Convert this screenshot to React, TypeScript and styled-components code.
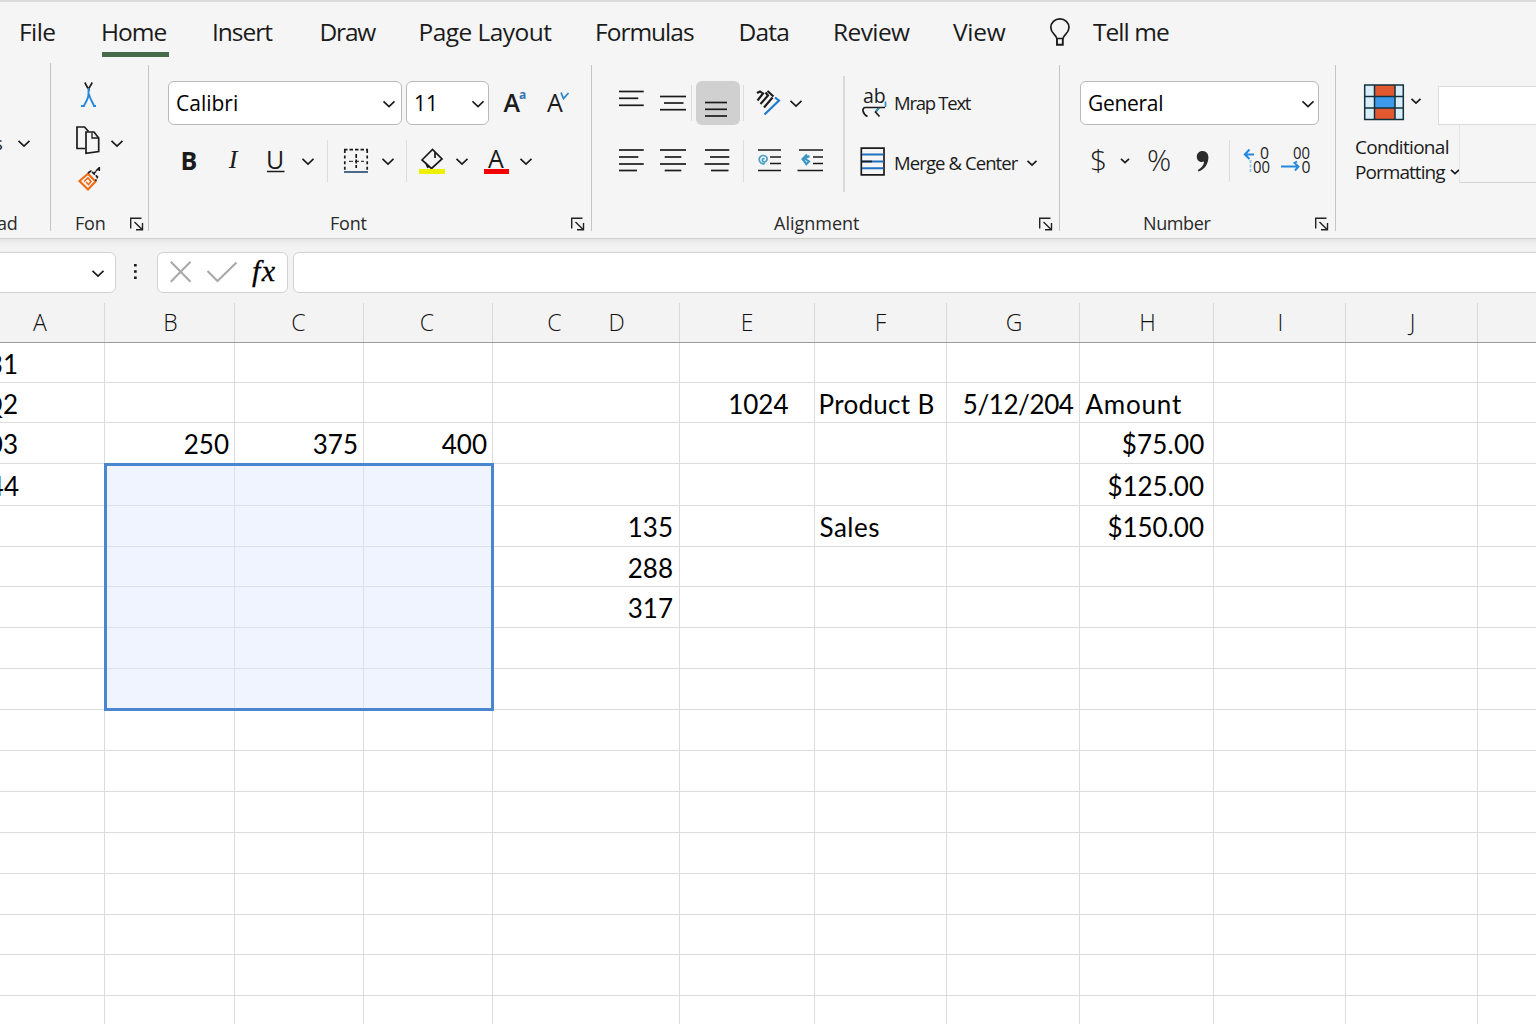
import React from "react";
import styled, { createGlobalStyle, css } from "styled-components";

const UI_FONT = `"Open Sans", "Noto Sans", sans-serif`;
const CELL_FONT = `Lato, "Open Sans", sans-serif`;

const GlobalStyle = createGlobalStyle`
  *, *::before, *::after { box-sizing: border-box; }
  html, body { margin: 0; padding: 0; overflow: hidden; }
  body { background: #fff; font-family: ${UI_FONT}; color: #1b1b1b; }
  svg { display: block; flex: none; }
`;

const Window = styled.div`
  width: 1536px;
  height: 1024px;
  overflow: hidden;
  display: flex;
  flex-direction: column;
  background: #fff;
`;

/* ---------- tabs ---------- */

const TabBar = styled.nav`
  flex: none;
  display: flex;
  height: 62px;
  padding: 0 0 0 18px;
  background: #f5f5f5;
  border-top: 2px solid #dadada;
`;

const Tab = styled.div<{ $w: number; $ls: number; $ml?: number; $active?: boolean }>`
  flex: none;
  width: ${(p) => p.$w}px;
  height: 56px;
  padding-left: ${(p) => p.$ml ?? 0}px;
  font-size: 24.5px;
  letter-spacing: ${(p) => p.$ls}px;
  line-height: 60px;
  white-space: nowrap;
  span {
    display: inline-block;
    height: 56px;
    ${(p) =>
      p.$active &&
      css`
        background: linear-gradient(#456b4b, #456b4b) 1px 50px / 67px 5px no-repeat;
        padding-right: 4px;
      `}
  }
`;

/* ---------- ribbon ---------- */

const Ribbon = styled.div`
  flex: none;
  display: flex;
  height: 177px;
  background: #f5f5f5;
  border-bottom: 1px solid #cfcfcf;
`;

const Group = styled.section<{ $w: number; $pl?: number }>`
  flex: none;
  display: flex;
  flex-direction: column;
  width: ${(p) => p.$w}px;
  padding: 19px 0 0 ${(p) => p.$pl ?? 0}px;
`;

const GroupDivider = styled.div<{ $top?: number }>`
  flex: none;
  width: 1px;
  height: ${(p) => 169 - (p.$top ?? 3)}px;
  margin-top: ${(p) => p.$top ?? 3}px;
  background: #c4c4c4;
`;

const Row = styled.div<{ $h?: number; $mt?: number; $pl?: number }>`
  flex: none;
  display: flex;
  align-items: center;
  height: ${(p) => p.$h ?? 44}px;
  margin-top: ${(p) => p.$mt ?? 0}px;
  padding-left: ${(p) => p.$pl ?? 0}px;
`;

const Footer = styled.div<{ $mt?: number; $pl: number }>`
  flex: none;
  display: flex;
  align-items: center;
  height: 24px;
  margin-top: ${(p) => p.$mt ?? 29}px;
  padding-left: ${(p) => p.$pl}px;
  font-size: 18px;
  line-height: 24px;
  color: #2a2a2a;
`;

const FooterText = styled.span<{ $w: number; $ls?: number }>`
  flex: none;
  width: ${(p) => p.$w}px;
  height: 26px;
  letter-spacing: ${(p) => p.$ls ?? -0.2}px;
  white-space: nowrap;
`;

const ClippedText = styled.span<{ $shift: number }>`
  display: block;
  margin-left: -${(p) => p.$shift}px;
`;

const Glyph = styled.span<{ $w: number; $size?: number; $weight?: number; $serif?: boolean }>`
  flex: none;
  display: block;
  width: ${(p) => p.$w}px;
  height: 44px;
  text-align: center;
  line-height: 42px;
  font-size: ${(p) => p.$size ?? 24}px;
  font-weight: ${(p) => p.$weight ?? 400};
  ${(p) => p.$serif && `font-family: "Liberation Serif", serif; font-style: italic;`}
`;

const Select = styled.div<{ $w: number; $mr?: number; $ls?: number }>`
  flex: none;
  display: flex;
  align-items: center;
  justify-content: space-between;
  width: ${(p) => p.$w}px;
  height: 44px;
  margin-right: ${(p) => p.$mr ?? 0}px;
  padding: 0 4px 0 7px;
  border: 1px solid #b9b9b9;
  border-radius: 6px;
  background: #fff;
  font-size: 21px;
  letter-spacing: ${(p) => p.$ls ?? 0}px;
  line-height: 42px;
  color: #000;
`;

const Rule = styled.div<{ $ml?: number; $mr?: number; $h?: number }>`
  flex: none;
  width: 1px;
  height: ${(p) => p.$h ?? 42}px;
  margin: 0 ${(p) => p.$mr ?? 0}px 0 ${(p) => p.$ml ?? 0}px;
  background: #dcdcdc;
`;

const Pressed = styled.div`
  flex: none;
  width: 44px;
  height: 44px;
  border-radius: 6px;
  background: #d0d0d0;
`;

const CommandText = styled.span<{ $w: number; $ls: number; $size?: number }>`
  flex: none;
  width: ${(p) => p.$w}px;
  height: 27px;
  font-size: ${(p) => p.$size ?? 18.5}px;
  letter-spacing: ${(p) => p.$ls}px;
  line-height: 25px;
  white-space: nowrap;
`;

const Split = styled.div`
  display: flex;
  height: 100px;
`;

const Column = styled.div<{ $w?: number }>`
  flex: none;
  display: flex;
  flex-direction: column;
  ${(p) => p.$w && `width: ${p.$w}px;`}
`;

const InnerDivider = styled.div`
  flex: none;
  width: 2px;
  height: 116px;
  margin-top: -5px;
  background: #d9d9d9;
`;

const StyleBox = styled.div`
  flex: none;
  width: 110px;
  height: 39px;
  margin: 4px 0 0 12px;
  background: #fff;
  border: 1px solid #dcdcdc;
`;

const StylePanel = styled.div`
  flex: none;
  width: 90px;
  height: 58px;
  border-left: 1px solid #e4e4e4;
  border-bottom: 1px solid #d4d4d4;
`;

/* ---------- formula bar ---------- */

const FormulaBar = styled.div`
  flex: none;
  display: flex;
  align-items: flex-start;
  height: 64px;
  padding-top: 13px;
  background: linear-gradient(#e6e6e6 0, #efefef 5px, #f3f3f3 10px);
`;

const Field = styled.div<{ $w: number; $ml?: number; $pl?: number }>`
  flex: none;
  display: flex;
  align-items: center;
  width: ${(p) => p.$w}px;
  height: 41px;
  margin-left: ${(p) => p.$ml ?? 0}px;
  padding-left: ${(p) => p.$pl ?? 0}px;
  background: #fff;
  border: 1px solid #d2d2d2;
  border-radius: 6px;
`;

const Fx = styled.span`
  height: 41px;
  padding-left: 1px;
  font-family: "Liberation Serif", serif;
  font-style: italic;
  font-size: 30px;
  letter-spacing: 1.5px;
  line-height: 37px;
  color: #000;
  -webkit-text-stroke: 0.3px #000;
`;

/* ---------- sheet ---------- */

const COLS = [105, 130, 129, 129, 187, 135, 132, 133, 134, 132, 132, 133];
const ROWS = [40, 40, 41, 42, 41, 40, 41, 41, 41, 41, 41, 41, 41, 41, 40, 41, 41];
const template = (a: number[]) => a.map((n) => n + "px").join(" ");

const HeaderRow = styled.div`
  flex: none;
  display: grid;
  grid-template-columns: ${template(COLS)};
  height: 40px;
  background: #f3f3f3;
  border-bottom: 1px solid #9b9b9b;
`;

const HeaderCell = styled.div<{ $pad?: number }>`
  display: flex;
  justify-content: center;
  gap: 47px;
  padding: 0 ${(p) => p.$pad ?? 0}px 0 2px;
  border-right: 1px solid #d9d9d9;
  font-weight: 350;
  font-size: 23px;
  line-height: 39px;
  color: #111;
  overflow: hidden;
`;

const Sheet = styled.div`
  flex: none;
  display: grid;
  grid-template-columns: ${template(COLS)};
  grid-template-rows: ${template(ROWS)};
  font-family: ${CELL_FONT};
  font-size: 26px;
  color: #000;
`;

const Cell = styled.div<{ $align?: "left" | "right"; $pad?: number; $ls?: number; $sel?: boolean }>`
  display: flex;
  align-items: center;
  justify-content: ${(p) => (p.$align === "right" ? "flex-end" : "flex-start")};
  padding: ${(p) => (p.$align === "right" ? `2px ${p.$pad ?? 6}px 0 0` : `2px 0 0 ${p.$pad ?? 5}px`)};
  border-right: 1px solid ${(p) => (p.$sel ? "#dbe0e9" : "#dcdcdc")};
  border-bottom: 1px solid ${(p) => (p.$sel ? "#dbe0e9" : "#dcdcdc")};
  background: ${(p) => (p.$sel ? "#eff4fe" : "#fff")};
  letter-spacing: ${(p) => p.$ls ?? 0}px;
  white-space: nowrap;
  overflow: hidden;
  line-height: 30px;
`;

const Selection = styled.div`
  grid-column: 2 / 5;
  grid-row: 4 / 10;
  margin: -1px -1px -1px -1px;
  border: 3px solid #4a86cf;
  z-index: 1;
`;

/* ---------- icons ---------- */

type IconProps = { x: number; y?: number; w: number; h?: number; children: React.ReactNode };

const Icon = ({ x, y = 81, w, h = 44, children }: IconProps) => (
  <svg width={w} height={h} viewBox={`${x} ${y} ${w} ${h}`} fill="none" stroke="#1b1b1b" strokeWidth="1.7">
    {children}
  </svg>
);

const Chevron = ({ w = 20, size = 11, dy = 0 }: { w?: number; size?: number; dy?: number }) => (
  <svg width={w} height="20" viewBox={`${-w / 2} ${-10 - dy} ${w} 20`} fill="none" stroke="#1b1b1b" strokeWidth="1.7">
    <path d={`M${-size / 2} -2.2L0 ${size / 2 - 2.5}L${size / 2} -2.2`} />
  </svg>
);

const Launcher = () => (
  <svg width="15" height="15" viewBox="-0.5 0.5 15 15" fill="none" stroke="#222" strokeWidth="1.4">
    <path d="M1.2 12V1.7H12M5 5.5L12.6 13M13 6.5V13.3H6.5" />
  </svg>
);

const Lines = ({ x, y, w, lines }: { x: number; y: number; w: number; lines: number[][] }) => (
  <Icon x={x} y={y} w={w}>
    {lines.map(([ly, a, b], i) => (
      <path key={i} d={`M${a} ${ly}H${b}`} />
    ))}
  </Icon>
);

/* ---------- ribbon groups ---------- */

const PasteGroup = () => (
  <Group $w={50}>
    <Row $mt={40} $h={44}>
      <CommandText $w={14} $ls={0}>
        <ClippedText $shift={6}>s</ClippedText>
      </CommandText>
      <Chevron />
    </Row>
    <Footer $pl={0} $mt={47}>
      <FooterText $w={30}>
        <ClippedText $shift={3}>ad</ClippedText>
      </FooterText>
    </Footer>
  </Group>
);

const ClipboardGroup = () => (
  <Group $w={97} $pl={20}>
    <Row $h={28}>
      <Icon x={71} y={81} w={34} h={28}>
        <path d="M84.8 82.5L88 88.5M92.3 82.5L88.8 88.5V91" strokeWidth="1.6" />
        <path d="M88.5 88V94C88.5 99 85 103 84 106H81M89 94C89.5 99 93 102 94 106H96" stroke="#2488d8" strokeWidth="1.9" />
      </Icon>
    </Row>
    <Row $h={30} $mt={16}>
      <Icon x={71} y={125} w={36} h={30}>
        <path d="M85 148.5H77V127H84.5L88.5 131.5" />
        <path d="M86 132H94L98.7 138V151.6L86 153.3Z" />
        <path d="M92 132.5V138H98" strokeWidth="1.3" />
      </Icon>
      <Chevron dy={3} />
    </Row>
    <Row $h={28} $mt={10}>
      <Icon x={71} y={165} w={34} h={28}>
        <path d="M79.5 181L88 173.8L95.5 181.5L88 189.5Z" stroke="#f06a12" strokeWidth="2.1" />
        <path d="M84 181.5L88 178L91 181.5L88.5 184.5L86 182" stroke="#f06a12" strokeWidth="1.6" />
        <path d="M88 173L91 171L97.5 177L95.5 181M93 174L96 171.5M96 171L99 168M99.3 167V172" strokeWidth="1.6" strokeDasharray="4 1" />
      </Icon>
    </Row>
    <Footer $pl={4} $mt={19}>
      <FooterText $w={54}>Fon</FooterText>
      <Launcher />
    </Footer>
  </Group>
);

const FontGroup = () => (
  <Group $w={442} $pl={19}>
    <Row>
      <Select $w={234} $mr={4}>
        Calibri
        <Chevron w={16} dy={0.5} />
      </Select>
      <Select $w={83} $mr={8}>
        11
        <Chevron w={12} dy={0.5} />
      </Select>
      <Icon x={497} w={38}>
        <text x="503.5" y="111.5" fontSize="25" fontWeight="600" fill="#1b1b1b" stroke="none">A</text>
        <text x="519" y="98.5" fontSize="12" fontWeight="700" fill="#2f74b5" stroke="none">a</text>
      </Icon>
      <Icon x={535} w={44}>
        <text x="547" y="111.5" fontSize="25" fill="#1b1b1b" stroke="none">A</text>
        <path d="M561 92.5L563.5 98.5L568.5 93" stroke="#2f86c8" strokeWidth="1.8" />
      </Icon>
    </Row>
    <Row $mt={14}>
      <Glyph $w={42} $size={25} $weight={700}>B</Glyph>
      <Glyph $w={46} $size={26} $serif>I</Glyph>
      <Icon x={256} y={139} w={38}>
        <text x="266" y="168.5" fontSize="25" fill="#1b1b1b" stroke="none">U</text>
        <path d="M267 171.5H284.5" strokeWidth="1.5" />
      </Icon>
      <Chevron w={28} />
      <Rule $ml={5} $mr={8} />
      <Icon x={336} y={139} w={40}>
        <path d="M344 149.7H368" strokeDasharray="3.5 2" />
        <path d="M344.8 150V170M367.2 150V170" strokeDasharray="3 2.6" />
        <path d="M356.2 154V168" strokeDasharray="4 1.5" />
        <path d="M349 161.3H364" strokeDasharray="4 2" strokeWidth="1" />
        <path d="M344 172H368" stroke="#4c6a88" strokeWidth="2" />
      </Icon>
      <Chevron w={24} />
      <Rule $ml={6} $mr={5} />
      <Icon x={412} y={139} w={40}>
        <path d="M422 160L432.5 149.5L442 159L431.5 168.5ZM435 152.5V158M428 168L425.5 162.5" />
        <rect x="419" y="169" width="26" height="5" fill="#eef200" stroke="none" />
      </Icon>
      <Chevron />
      <Icon x={472} y={139} w={44}>
        <text x="488" y="167.5" fontSize="25" fill="#1b1b1b" stroke="none">A</text>
        <rect x="484" y="169" width="25" height="5" fill="#f40000" stroke="none" />
      </Icon>
      <Chevron />
    </Row>
    <Footer $pl={162}>
      <FooterText $w={240}>Font</FooterText>
      <Launcher />
    </Footer>
  </Group>
);

const AlignmentGroup = () => (
  <Group $w={467} $pl={18}>
    <Split>
      <Column $w={233}>
        <Row>
          <Lines x={610} y={81} w={42} lines={[[91.5, 619, 643.7], [98.3, 619, 638.3], [105.3, 619, 643.7]]} />
          <Lines x={652} y={81} w={39} lines={[[96.5, 660, 686], [103, 664, 683.5], [109.7, 660, 686]]} />
          <Rule $h={36} $mr={4} />
          <Pressed>
            <Lines x={696} y={81} w={44} lines={[[102.5, 705, 727], [109.3, 705, 727], [116, 705, 727]]} />
          </Pressed>
          <Rule $h={36} $ml={3} />
          <Icon x={744} w={42}>
            <path d="M757 93L760 91.500L763 93.500L757.500 100.500M760.500 104L768 95.500L765.500 92.500M764 107.500L772.500 97.500M767.500 91L773.500 96.500" strokeWidth="2.1" />
            <path d="M764.5 114.5L779 100.500L775 97.5" stroke="#1f78d1" strokeWidth="2.1" />
          </Icon>
          <Chevron />
        </Row>
        <Row $mt={14}>
          <Lines x={610} y={139} w={42} lines={[[150, 619, 643.7], [157, 619, 638.3], [164, 619, 643.7], [170.5, 619, 637]]} />
          <Lines x={652} y={139} w={44} lines={[[150, 660, 686], [157, 664.7, 681.3], [164, 660, 686], [170.5, 664.7, 681.3]]} />
          <Lines x={696} y={139} w={47} lines={[[150, 705, 729.3], [157, 710, 729.3], [164, 704.5, 729.3], [170.5, 711, 728.5]]} />
          <Rule />
          <Icon x={744} y={139} w={44}>
            <path d="M758 150H781M770 157H781M770 163.5H781M758 170.5H781" />
            <path d="M765 163.500C761 165 758.500 161 759.500 158C760.500 155 765.500 154.500 766.800 157.500C768 160.500 765 163 763 161.500C761.500 160 763 158 764.500 159" stroke="#4a9fc4" strokeWidth="1.700" />
          </Icon>
          <Icon x={788} y={139} w={44}>
            <path d="M799 150H823M813 157H823M813 163.5H823M797.5 170.5H823" />
            <path d="M809.500 156L804.5 158.5L809 161.5L805.5 165M807 154.5L802.500 159L806 163.500" stroke="#3b97c6" strokeWidth="2.100" />
          </Icon>
        </Row>
      </Column>
      <InnerDivider />
      <Column>
        <Row $pl={13}>
          <Icon x={859} w={36}>
            <text x="864" y="103" fontSize="19.5" fill="#1b1b1b" stroke="none">ab</text>
            <path d="M886 107.5H866C862.5 108 863.5 114 868.5 116.5M880.5 116.5L876.5 112L880 108" />
            <path d="M880 108L877 111.5M886.5 101.5V107" stroke="#2a93b8" />
          </Icon>
          <CommandText $w={120} $ls={-1.25}>Mrap Text</CommandText>
        </Row>
        <Row $mt={16} $pl={13}>
          <Icon x={859} y={141} w={36}>
            <path d="M862.3 148.2H885V174.8H862.3Z" />
            <path d="M863 154.5H884.5M863 161.5H884.5M863 168.3H884.5" stroke="#1f6fc4" strokeWidth="1.9" />
            <path d="M863 161.5H873" />
          </Icon>
          <CommandText $w={129} $ls={-0.9}>Merge &amp; Center</CommandText>
          <Chevron size={9} w={18} />
        </Row>
      </Column>
    </Split>
    <Footer $pl={164} $mt={31}>
      <FooterText $w={264} $ls={0}>Alignment</FooterText>
      <Launcher />
    </Footer>
  </Group>
);

const NumberGroup = () => (
  <Group $w={275} $pl={20}>
    <Row>
      <Select $w={239} $ls={-0.3}>
        General
        <Chevron w={12} dy={0.5} />
      </Select>
    </Row>
    <Row $mt={14}>
      <Glyph $w={37} $size={30} $weight={350}>$</Glyph>
      <Chevron w={16} size={8} />
      <Glyph $w={52} $size={30} $weight={350}>%</Glyph>
      <Icon x={1185} y={139} w={44}>
        <path d="M1202.5 151C1206.5 151 1208.6 154 1208.4 158C1208 165 1204 169.500 1198.5 171.500L1197.8 170C1201.500 168 1204 165 1204 161.500C1201 163 1196.800 161 1196.800 156.700C1196.800 153.500 1199 151 1202.500 151Z" fill="#2a2a2a" stroke="none" />
      </Icon>
      <Rule />
      <Icon x={1230} y={139} w={46}>
        <path d="M1254 154.500H1245M1249.500 149.500L1244.800 154.500L1249.500 159" stroke="#2488e0" strokeWidth="2" />
        <path d="M1250.500 160V173" stroke="#8cc8f0" strokeWidth="1.800" strokeDasharray="3 1.500" />
        <text x="1260" y="159" fontSize="16" textLength="9" lengthAdjust="spacingAndGlyphs" fill="#1b1b1b" stroke="none">0</text>
        <text x="1253" y="172.500" fontSize="16" textLength="17" lengthAdjust="spacingAndGlyphs" fill="#1b1b1b" stroke="none">00</text>
      </Icon>
      <Icon x={1276} y={139} w={40}>
        <path d="M1281 166.500H1297M1297 161.500L1294.500 163L1298.500 166.500L1295 170.500" stroke="#2488e0" strokeWidth="1.900" />
        <text x="1293" y="159" fontSize="16" textLength="17" lengthAdjust="spacingAndGlyphs" fill="#1b1b1b" stroke="none">00</text>
        <text x="1301.500" y="172.500" fontSize="16" textLength="9" lengthAdjust="spacingAndGlyphs" fill="#1b1b1b" stroke="none">0</text>
      </Icon>
    </Row>
    <Footer $pl={63}>
      <FooterText $w={171} $ls={-0.4}>Number</FooterText>
      <Launcher />
    </Footer>
  </Group>
);

const StylesGroup = () => (
  <Group $w={200} $pl={18}>
    <Row>
      <Icon x={1354} w={52}>
        <rect x="1364.500" y="85" width="39" height="34.500" fill="#d8effa" stroke="none" />
        <rect x="1374.500" y="85" width="20.500" height="34.500" fill="#e2592f" stroke="none" />
        <rect x="1374.500" y="96.500" width="20.500" height="11.500" fill="#3d9bea" stroke="none" />
        <path d="M1364.700 85H1403.300V119.500H1364.700ZM1364.500 96.500H1403.500M1364.500 108H1403.500M1374.500 85V119.500M1395 85V119.500" stroke="#12303f" strokeWidth="1.500" />
      </Icon>
      <Chevron w={20} size={9} dy={-2} />
      <StyleBox />
    </Row>
    <Row $h={58}>
      <Column $w={105}>
        <Row $h={25} $mt={13} $pl={1}>
          <CommandText $w={100} $ls={-0.7} $size={19}>Conditional</CommandText>
        </Row>
        <Row $h={25} $pl={1}>
          <CommandText $w={92} $ls={-0.95} $size={19}>Pormatting</CommandText>
          <Chevron w={16} size={8} dy={-1} />
        </Row>
      </Column>
      <StylePanel />
    </Row>
  </Group>
);

/* ---------- sheet data ---------- */

type CellData = { text: string; align?: "left" | "right"; pad?: number; ls?: number };

const DATA: Record<string, CellData> = {
  "0-0": { text: "31", align: "right", pad: 86 },
  "1-0": { text: "Q2", align: "right", pad: 86 },
  "2-0": { text: "03", align: "right", pad: 86 },
  "3-0": { text: "44", align: "right", pad: 85 },
  "2-1": { text: "250", align: "right", pad: 5 },
  "2-2": { text: "375", align: "right", pad: 5 },
  "2-3": { text: "400", align: "right", pad: 5 },
  "4-4": { text: "135", align: "right" },
  "5-4": { text: "288", align: "right" },
  "6-4": { text: "317", align: "right" },
  "1-5": { text: "1024", align: "right", pad: 25.5 },
  "1-6": { text: "Product B", pad: 3.5, ls: 0.3 },
  "4-6": { text: "Sales", pad: 4.5, ls: 0.5 },
  "1-7": { text: "5/12/204", align: "right", pad: 5.5, ls: -0.4 },
  "1-8": { text: "Amount", pad: 5.5, ls: 0.8 },
  "2-8": { text: "$75.00", align: "right", pad: 8.5, ls: 0.2 },
  "3-8": { text: "$125.00", align: "right", pad: 9 },
  "4-8": { text: "$150.00", align: "right", pad: 9 },
};

const HEADERS: { labels: string[]; pad?: number }[] = [
  { labels: ["A"], pad: 26 },
  { labels: ["B"] },
  { labels: ["C"], pad: 3 },
  { labels: ["C"], pad: 4 },
  { labels: ["C", "D"], pad: 2 },
  { labels: ["E"], pad: 2 },
  { labels: ["F"], pad: 2 },
  { labels: ["G"] },
  { labels: ["H"] },
  { labels: ["I"] },
  { labels: ["J"] },
  { labels: ["K"], pad: 6 },
];

const TABS: { name: string; w: number; ml: number; ls: number }[] = [
  { name: "File", w: 82, ml: 1, ls: -0.6 },
  { name: "Home", w: 111, ml: 1, ls: -1 },
  { name: "Insert", w: 107, ml: 1, ls: -1 },
  { name: "Draw", w: 99, ml: 1.5, ls: -1.2 },
  { name: "Page Layout", w: 177, ml: 1.5, ls: -0.55 },
  { name: "Formulas", w: 144, ml: 1, ls: -1 },
  { name: "Data", w: 94, ml: 0.5, ls: -0.8 },
  { name: "Review", w: 121, ml: 1, ls: -0.6 },
  { name: "View", w: 95, ml: 0, ls: -0.3 },
];

export default function App() {
  return (
    <Window>
      <GlobalStyle />
      <TabBar>
        {TABS.map((t) => (
          <Tab key={t.name} $w={t.w} $ml={t.ml} $ls={t.ls} $active={t.name === "Home"}>
            <span>{t.name}</span>
          </Tab>
        ))}
        <Icon x={1048} y={2} w={45} h={56}>
          <path d="M1056.800 38.500C1056.300 34.500 1050.800 33.500 1050.800 27.500A9 8.600 0 0 1 1069 27.500C1069 33.500 1063.500 34.500 1063 38.500Z" />
          <path d="M1057 38.500V44.800H1062.800V38.500" strokeWidth="1.900" />
        </Icon>
        <Tab $w={120} $ls={-0.95}>
          <span>Tell me</span>
        </Tab>
      </TabBar>

      <Ribbon>
        <PasteGroup />
        <GroupDivider $top={1} />
        <ClipboardGroup />
        <GroupDivider />
        <FontGroup />
        <GroupDivider />
        <AlignmentGroup />
        <GroupDivider />
        <NumberGroup />
        <GroupDivider />
        <StylesGroup />
      </Ribbon>

      <FormulaBar>
        <Field $w={122} $ml={-6} $pl={93}>
          <Chevron w={20} />
        </Field>
        <Icon x={116} y={252} w={41} h={41}>
          <path d="M134 265.200h2.700M134 271.500h2.700M134 277.800h2.700" strokeWidth="2.600" />
        </Icon>
        <Field $w={131}>
          <Icon x={158} y={253} w={93} h={39}>
            <path d="M170.800 261.800L190.500 281.800M190.500 261.800L170.800 281.800M207.500 271L217.500 281L236.500 262.500" stroke="#a9a9a9" strokeWidth="2.100" />
          </Icon>
          <Fx>fx</Fx>
        </Field>
        <Field $w={1260} $ml={5} />
      </FormulaBar>

      <HeaderRow>
        {HEADERS.map((h, i) => (
          <HeaderCell key={i} $pad={h.pad}>
            {h.labels.map((l) => (
              <span key={l}>{l}</span>
            ))}
          </HeaderCell>
        ))}
      </HeaderRow>
      <Sheet>
        {ROWS.map((_, r) =>
          COLS.map((_, c) => {
            const d = DATA[`${r}-${c}`];
            return (
              <Cell
                key={`${r}-${c}`}
                style={{ gridRow: r + 1, gridColumn: c + 1 }}
                $align={d?.align}
                $pad={d?.pad}
                $ls={d?.ls}
                $sel={r >= 3 && r <= 8 && c >= 1 && c <= 3}
              >
                {d?.text}
              </Cell>
            );
          })
        )}
        <Selection />
      </Sheet>
    </Window>
  );
}
